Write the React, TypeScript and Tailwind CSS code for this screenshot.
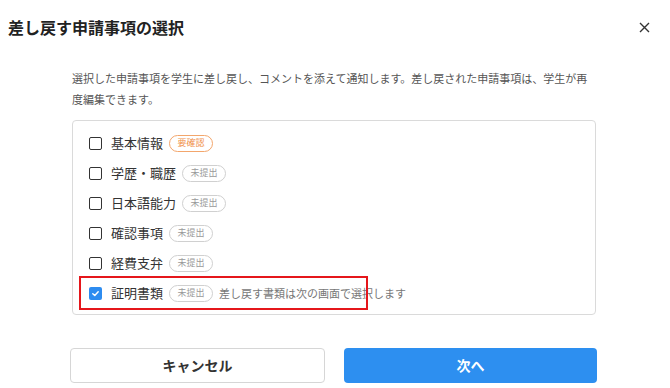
import React from "react";

const font = { fontFamily: '"Noto Sans CJK JP", "Noto Sans", sans-serif' };

type Item = { label: string; badge: string; warn?: boolean; checked?: boolean; note?: string };

const items: Item[] = [
  { label: "基本情報", badge: "要確認", warn: true },
  { label: "学歴・職歴", badge: "未提出" },
  { label: "日本語能力", badge: "未提出" },
  { label: "確認事項", badge: "未提出" },
  { label: "経費支弁", badge: "未提出" },
  { label: "証明書類", badge: "未提出", checked: true, note: "差し戻す書類は次の画面で選択します" },
];

function Box({ checked }: { checked?: boolean }) {
  if (checked) {
    return (
      <span className="flex h-[13px] w-[13px] items-center justify-center rounded-[2px] bg-[#2d8cf0]">
        <svg width="9" height="9" viewBox="0 0 10 10" fill="none">
          <path d="M2 5.2 L4.2 7.2 L8 3" stroke="white" strokeWidth="1.6" strokeLinecap="round" strokeLinejoin="round" />
        </svg>
      </span>
    );
  }
  return <span className="block h-[13px] w-[13px] rounded-[2px] border-[1.5px] border-[#333]" />;
}

export default function App() {
  return (
    <div className="h-[388px] w-[670px] bg-white" style={font}>
      <div className="flex h-[54px] items-center justify-between pl-2 pr-5">
        <div className="text-[16px] font-bold text-[#222]">差し戻す申請事項の選択</div>
        <svg width="11" height="11" viewBox="0 0 11 11">
          <path d="M1 1 L10 10 M10 1 L1 10" stroke="#333" strokeWidth="1.4" />
        </svg>
      </div>
      <div className="ml-[72px] w-[524px]">
        <p className="mt-[14px] text-[11px] leading-[21px] text-[#555]">
          選択した申請事項を学生に差し戻し、コメントを添えて通知します。差し戻された申請事項は、学生が再度編集できます。
        </p>
        <div className="mt-[10px] rounded-[4px] border border-[#dadada] pb-[6px] pt-[7px]">
          {items.map((it) => (
            <div key={it.label} className="relative flex h-[30px] items-center pl-4">
              <Box checked={it.checked} />
              <span className="ml-[9px] text-[13px] text-[#333]">{it.label}</span>
              <span
                className={
                  "ml-[6px] flex h-[17px] w-[44px] items-center justify-center rounded-full border text-[9px] " +
                  (it.warn ? "border-[#f3a66c] text-[#f0904a]" : "border-[#d0d0d0] text-[#999]")
                }
              >
                {it.badge}
              </span>
              {it.note && <span className="ml-[6px] text-[11px] text-[#777]">{it.note}</span>}
              {it.checked && (
                <div className="absolute left-[6px] top-[-2px] h-[34px] w-[289px] border-2 border-[#e5161b]" />
              )}
            </div>
          ))}
        </div>
      </div>
      <div className="ml-[70px] mt-[33px] flex w-[527px] gap-[19px]">
        <button className="flex h-[35px] flex-1 items-center justify-center rounded-[4px] border border-[#d6d6d6] bg-white text-[14px] font-bold text-[#333]">
          キャンセル
        </button>
        <button className="flex h-[35px] flex-1 items-center justify-center rounded-[4px] bg-[#2d8ff0] text-[14px] font-bold text-white">
          次へ
        </button>
      </div>
    </div>
  );
}
